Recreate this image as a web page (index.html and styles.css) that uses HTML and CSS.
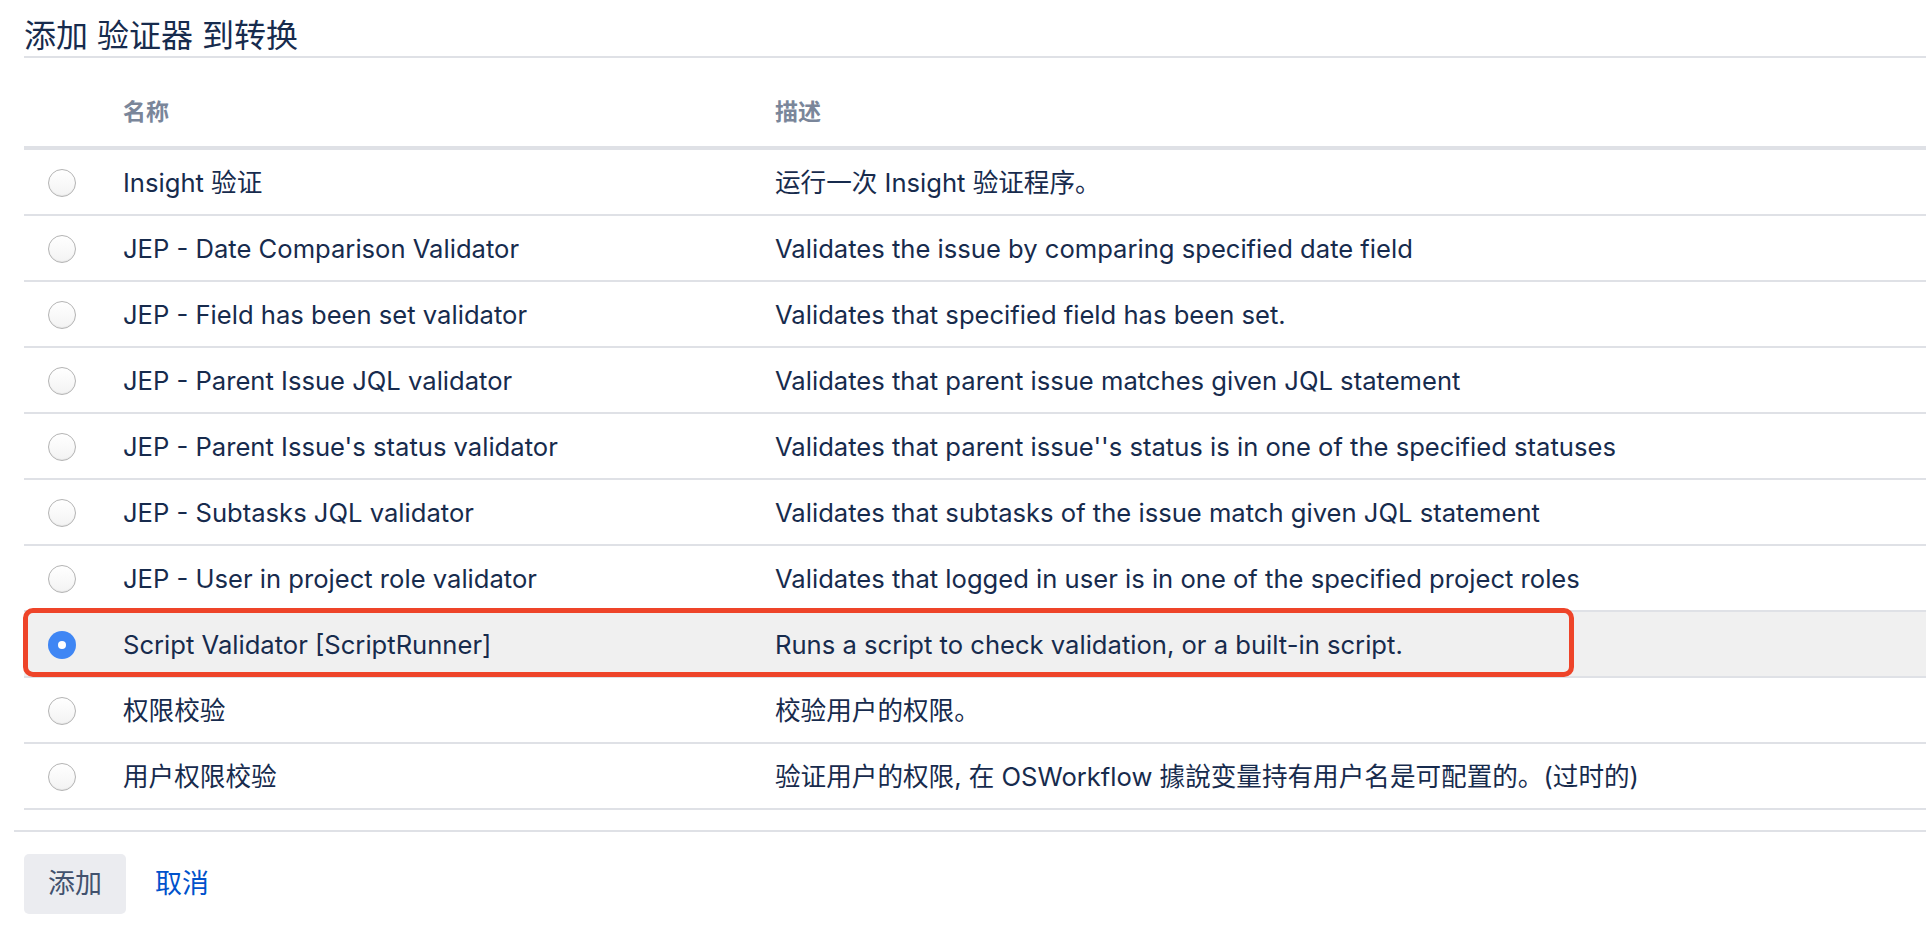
FILE: index.html
```html
<!DOCTYPE html>
<html lang="zh-CN">
<head>
<meta charset="utf-8">
<title>添加 验证器 到转换</title>
<link rel="stylesheet" href="styles.css">
</head>
<body>
<div class="page">
  <h2 class="title">添加 验证器 到转换</h2>
  <table class="list">
    <colgroup>
      <col class="col-radio">
      <col class="col-name">
      <col class="col-desc">
    </colgroup>
    <thead>
      <tr><th></th><th>名称</th><th>描述</th></tr>
    </thead>
    <tbody>
      <tr><td><span class="radio"></span></td><td>Insight 验证</td><td>运行一次 Insight 验证程序。</td></tr>
      <tr><td><span class="radio"></span></td><td>JEP - Date Comparison Validator</td><td>Validates the issue by comparing specified date field</td></tr>
      <tr><td><span class="radio"></span></td><td>JEP - Field has been set validator</td><td>Validates that specified field has been set.</td></tr>
      <tr><td><span class="radio"></span></td><td>JEP - Parent Issue JQL validator</td><td>Validates that parent issue matches given JQL statement</td></tr>
      <tr><td><span class="radio"></span></td><td>JEP - Parent Issue's status validator</td><td>Validates that parent issue''s status is in one of the specified statuses</td></tr>
      <tr><td><span class="radio"></span></td><td>JEP - Subtasks JQL validator</td><td>Validates that subtasks of the issue match given JQL statement</td></tr>
      <tr><td><span class="radio"></span></td><td>JEP - User in project role validator</td><td>Validates that logged in user is in one of the specified project roles</td></tr>
      <tr class="selected"><td class="anchor"><span class="radio checked"></span><span class="highlight"></span></td><td>Script Validator [ScriptRunner]</td><td>Runs a script to check validation, or a built-in script.</td></tr>
      <tr><td><span class="radio"></span></td><td>权限校验</td><td>校验用户的权限。</td></tr>
      <tr><td><span class="radio"></span></td><td>用户权限校验</td><td>验证用户的权限, 在 OSWorkflow 據說变量持有用户名是可配置的。(过时的)</td></tr>
    </tbody>
  </table>
  <div class="footer">
    <button class="btn" type="button">添加</button>
    <a class="link" href="#">取消</a>
  </div>
</div>
</body>
</html>
```
FILE: styles.css
```css
html, body {
  margin: 0;
  padding: 0;
  background: #ffffff;
}

body {
  font-family: Inter, "Noto Sans CJK SC", sans-serif;
  color: #172b4d;
}

.page {
  padding-left: 24px;
}

.title {
  margin: 0;
  padding-top: 16px;
  font-size: 32px;
  line-height: 40px;
  font-weight: 400;
  color: #172b4d;
  border-bottom: 2px solid #dfe1e6;
}

.list {
  width: 100%;
  margin-top: 20px;
  border-collapse: separate;
  border-spacing: 0;
  font-size: 25.6px;
}

.col-radio { width: 99px; }
.col-name { width: 652px; }

.list th {
  text-align: left;
  padding: 20px 0;
  line-height: 28px;
  font-size: 23px;
  font-weight: 700;
  color: #7a869a;
  border-bottom: 4px solid #dfe1e6;
}

.list td {
  padding: 18px 0 16px;
  line-height: 30px;
  border-bottom: 2px solid #dfe1e6;
  white-space: nowrap;
  vertical-align: middle;
}

.list tr.selected td {
  background: #f0f0f0;
}

.anchor {
  position: relative;
}

.radio {
  display: block;
  box-sizing: border-box;
  width: 28px;
  height: 28px;
  margin-left: 24px;
  margin-top: -1px;
  border-radius: 50%;
  border: 1px solid #b4b4b4;
  background: linear-gradient(#ffffff, #f3f3f3);
  box-shadow: inset 0 -1px 1px rgba(0, 0, 0, 0.05);
  position: relative;
}

.radio.checked {
  border: none;
  background: #3f86f4;
  box-shadow: none;
}

.radio.checked::after {
  content: "";
  position: absolute;
  left: 10px;
  top: 10px;
  width: 8px;
  height: 8px;
  border-radius: 50%;
  background: #ffffff;
}

.highlight {
  position: absolute;
  left: -1px;
  top: -4px;
  width: 1551px;
  height: 69px;
  box-sizing: border-box;
  border: 5px solid #ee4429;
  border-radius: 10px;
  pointer-events: none;
}

.footer {
  margin-top: 20px;
  margin-left: -10px;
  padding: 22px 0 0 10px;
  border-top: 2px solid #dfe1e6;
  display: flex;
  align-items: center;
  gap: 29px;
}

.btn {
  font-family: Inter, "Noto Sans CJK SC", sans-serif;
  font-size: 27px;
  line-height: 60px;
  height: 60px;
  width: 102px;
  padding: 0;
  border: none;
  border-radius: 5px;
  background: #ebecf0;
  color: #42526e;
}

.link {
  font-size: 27px;
  line-height: 60px;
  color: #0052cc;
  text-decoration: none;
}
```
